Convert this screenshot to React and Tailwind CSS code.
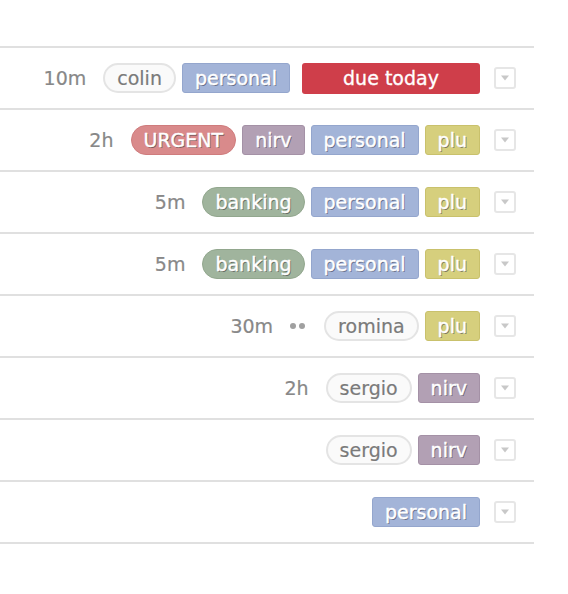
import React from "react";

const TAG = {
  personal: "bg-[#a3b4d8] border-[#94a6cd]",
  nirv: "bg-[#b2a0b4] border-[#a491a6]",
  plu: "bg-[#d6cf7d] border-[#c9c16c]",
};
const PILL = {
  URGENT: "bg-[#d98a8b] border-[#cf7c7d]",
  banking: "bg-[#a0b49d] border-[#92a78e]",
};

function Tag({ name }) {
  return (
    <span
      className={`inline-block h-[30px] rounded-[3px] border px-[12px] text-[19px] leading-[29px] text-white [-webkit-text-stroke:0.4px_white] [text-shadow:1px_1px_0_rgba(50,50,70,0.55)] ${TAG[name]}`}
    >
      {name}
    </span>
  );
}

function Pill({ name }) {
  return (
    <span
      className={`inline-block h-[30px] rounded-full border px-[12px] text-[19px] leading-[29px] text-white [-webkit-text-stroke:0.4px_white] [text-shadow:1px_1px_0_rgba(50,50,50,0.55)] ${PILL[name]}`}
    >
      {name}
    </span>
  );
}

function Person({ name }) {
  return (
    <span className="inline-block h-[30px] rounded-full border-2 border-[#e4e4e4] bg-[#fafafa] px-[12px] text-[19px] leading-[27px] text-[#7a7a7a] [-webkit-text-stroke:0.2px_#7a7a7a]">
      {name}
    </span>
  );
}

function Dropdown() {
  return (
    <div className="ml-[14px] flex h-[22px] w-[22px] items-center justify-center rounded-[3px] border-2 border-[#e6e6e6] bg-white">
      <svg width="10" height="6" viewBox="0 0 10 6">
        <path d="M1 0.5 L9 0.5 L5 5.5 Z" fill="#c8c8c8" />
      </svg>
    </div>
  );
}

function Row({ time, dots, children }) {
  return (
    <div className="flex h-[62px] items-center justify-end border-b-2 border-[#e0e0e0] pr-[18px]">
      {time && (
        <span className="mr-[17px] text-[19px] text-[#888888] [-webkit-text-stroke:0.2px_#888888]">
          {time}
        </span>
      )}
      {dots && (
        <span className="mr-[19px] flex gap-[3px]">
          <span className="h-[6px] w-[6px] rounded-full bg-[#a0a0a0]" />
          <span className="h-[6px] w-[6px] rounded-full bg-[#a0a0a0]" />
        </span>
      )}
      <div className="flex items-center gap-[6px]">{children}</div>
      <Dropdown />
    </div>
  );
}

export default function App() {
  return (
    <div
      className="h-[594px] w-[568px] bg-white pt-[46px]"
      style={{ fontFamily: '"DejaVu Sans", "Liberation Sans", sans-serif' }}
    >
      <div className="w-[534px] border-t-2 border-[#e0e0e0]">
        <Row time="10m">
          <Person name="colin" />
          <Tag name="personal" />
          <span className="ml-[6px] inline-block h-[31px] w-[178px] rounded-[3px] bg-[#cf3e4a] text-center text-[19px] leading-[31px] text-white [-webkit-text-stroke:0.3px_white]">
            due today
          </span>
        </Row>
        <Row time="2h">
          <Pill name="URGENT" />
          <Tag name="nirv" />
          <Tag name="personal" />
          <Tag name="plu" />
        </Row>
        <Row time="5m">
          <Pill name="banking" />
          <Tag name="personal" />
          <Tag name="plu" />
        </Row>
        <Row time="5m">
          <Pill name="banking" />
          <Tag name="personal" />
          <Tag name="plu" />
        </Row>
        <Row time="30m" dots>
          <Person name="romina" />
          <Tag name="plu" />
        </Row>
        <Row time="2h">
          <Person name="sergio" />
          <Tag name="nirv" />
        </Row>
        <Row>
          <Person name="sergio" />
          <Tag name="nirv" />
        </Row>
        <Row>
          <Tag name="personal" />
        </Row>
      </div>
    </div>
  );
}
